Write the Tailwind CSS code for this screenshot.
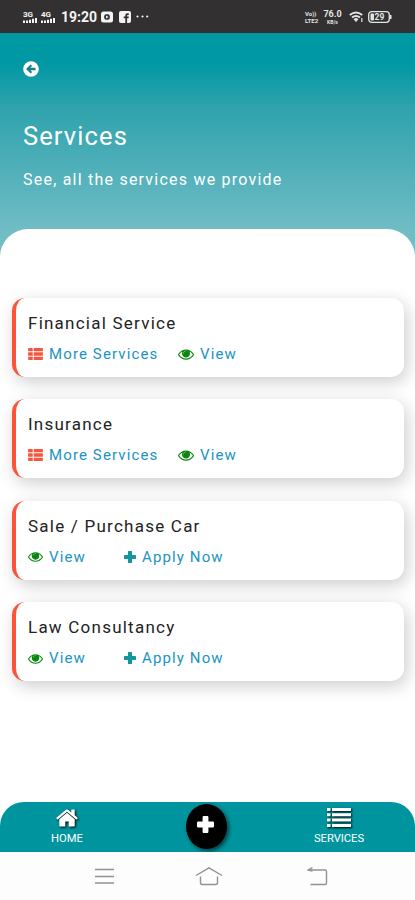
<!DOCTYPE html>
<html lang="en">
<head>
    <meta charset="UTF-8">
    <meta name="viewport" content="width=device-width, initial-scale=1.0">
    <title>Services</title>
    <script src="https://cdn.jsdelivr.net/npm/@tailwindcss/browser@4"></script>
</head>

<body class="bg-white font-['Roboto',sans-serif]">
    <!-- Icons -->
    <svg class="hidden">
        <symbol id="eye" viewBox="0 0 1792 1792">
            <path d="M1664 960q-152-236-381-353 61 104 61 225 0 185-131.5 316.5t-316.5 131.5-316.5-131.5-131.5-316.5q0-121 61-225-229 117-381 353 133 205 333.5 326.5t434.5 121.5 434.5-121.5 333.5-326.5zm-720-384q0-20-14-34t-34-14q-125 0-214.5 89.5t-89.5 214.500q0 20 14 34t34 14 34-14 14-34q0-86 61-147t147-61q20 0 34-14t14-34zm848 384q0 34-20 69-140 230-376.5 368.5t-499.5 138.5-499.5-139-376.5-368q-20-35-20-69t20-69q140-229 376.5-368t499.5-139 499.5 139 376.5 368q20 35 20 69z"/>
            <circle cx="930" cy="900" r="330"/>
        </symbol>
        <symbol id="th-list" viewBox="0 0 16 13">
            <path d="M0 .8q0-.8.8-.8h3.400q.8 0 .8.8v2.800H0zM6 0h9.200q.8 0 .8.8V3.600H6zM0 4.700h5v3.600H0zM6 4.700h10v3.600H6zM0 9.400h5v3.600H.8q-.8 0-.8-.8zM6 9.400h10v2.800q0 .8-.8.8H6z"/>
        </symbol>
        <symbol id="plus" viewBox="0 0 14 14">
            <path d="M5.6 0h2.8q1 0 1 1v3.6H13q1 0 1 1v2.8q0 1-1 1H9.4V13q0 1-1 1H5.6q-1 0-1-1V9.4H1q-1 0-1-1V5.6q0-1 1-1h3.6V1q0-1 1-1z"/>
        </symbol>
    </svg>

    <div class="flex h-[900px] w-[415px] flex-col overflow-hidden">
        <!-- Status bar -->
        <div class="flex h-[33px] shrink-0 items-center justify-between bg-[#323031] pr-[23px] pl-[23px] text-[#f4f4f4]">
            <div class="flex items-center">
                <div class="flex w-[14px] flex-col">
                    <span class="text-[8px] leading-[7px] font-bold">3G</span>
                    <svg class="h-[5px] w-[14px]" viewBox="0 0 14 6" preserveAspectRatio="none" fill="currentColor"><path d="M0 3h2v3H0zM3 3h2v3H3zM6 2h2v4H6zM9 1h2v5H9zM12 0h2v6h-2z"/></svg>
                </div>
                <div class="ml-[4px] flex w-[14px] flex-col">
                    <span class="text-[8px] leading-[7px] font-bold">4G</span>
                    <svg class="h-[5px] w-[14px]" viewBox="0 0 14 6" preserveAspectRatio="none" fill="currentColor"><path d="M0 3h2v3H0zM3 3h2v3H3zM6 2h2v4H6zM9 1h2v5H9zM12 0h2v6h-2z"/></svg>
                </div>
                <span class="ml-[6px] w-[36px] text-[14px] leading-none font-bold whitespace-nowrap">19:20</span>
                <svg class="ml-[4px] h-[12px] w-[12px]" viewBox="0 0 12 12"><rect y=".5" width="12" height="11" rx="2.5" fill="currentColor"/><rect x="3.2" y="3.2" width="5.600" height="5.600" rx="2" fill="#323031"/><path d="M5 4.500l2.600 1.500-2.600 1.500z" fill="currentColor"/></svg>
                <svg class="ml-[6px] h-[12px] w-[12px]" viewBox="0 0 12 12"><rect width="12" height="12" rx="2" fill="currentColor"/><path d="M6.3 12V7.3H4.7V5.5h1.6V4.2q0-2 2-2h1.5v1.7H8.7q-.6 0-.6.7v.9h1.7l-.3 1.8H8.1V12z" fill="#323031"/></svg>
                <svg class="ml-[5px] h-[3px] w-[13px]" viewBox="0 0 13 3" fill="currentColor"><circle cx="1.5" cy="1.5" r="1.1"/><circle cx="6.5" cy="1.5" r="1.1"/><circle cx="11.2" cy="1.5" r="1.1"/></svg>
            </div>
            <div class="flex items-center text-[#e4e4e4]">
                <div class="flex w-[15px] flex-col text-[6px] leading-[7px] font-bold whitespace-nowrap">
                    <span>Vo))</span>
                    <span>LTE2</span>
                </div>
                <div class="ml-[3px] flex w-[19px] flex-col items-center font-bold">
                    <span class="text-[9px] leading-[10px]">76.0</span>
                    <span class="text-[5px] leading-[6px]">KB/s</span>
                </div>
                <svg class="ml-[7px] h-[12px] w-[15px]" viewBox="0 0 15 12" fill="none" stroke="currentColor" stroke-width="1.900"><path d="M.8 4Q7 -1 13.2 4M3 6.6Q7 3.4 11 6.6"/><path d="M5 8.2q2-1.4 4 0L7 10.5z" fill="currentColor" stroke-width="1"/><path d="M12.8 7v4" stroke-width="1.2"/></svg>
                <svg class="ml-[4px] h-[12px] w-[24px]" viewBox="0 0 24 12"><rect x=".7" y=".7" width="20.6" height="10.6" rx="3" fill="none" stroke="currentColor" stroke-width="1.3"/><path d="M22 4h1.5v4H22z" fill="currentColor"/><rect x="2.5" y="2.5" width="3.500" height="7" rx="1" fill="currentColor"/><text x="11.500" y="9" text-anchor="middle" font-size="8.500" font-weight="700" fill="currentColor">29</text></svg>
            </div>
        </div>

        <!-- Header -->
        <div class="flex grow flex-col bg-[linear-gradient(to_bottom,#0098a2_0px,#0098a4_30px,#2fa3ad_75px,#70bcc5_196px,#78c0c9_240px)]">
            <div class="h-[196px] shrink-0 pt-[28px] pl-[23px] text-white">
                <svg class="h-[16px] w-[16px]" viewBox="0 0 16 16"><circle cx="8" cy="8" r="7.8" fill="white"/><path d="M3 8l4.6-4.6 1.5 1.5L7.4 6.7h5.1v2.6H7.4l1.7 1.8-1.5 1.5z" fill="#15818d"/></svg>
                <h1 class="mt-[43px] text-[25.5px] leading-[32px] tracking-[1.1px] whitespace-nowrap">Services</h1>
                <p class="mt-[18px] text-[16px] leading-[20px] tracking-[1.22px] whitespace-nowrap">See, all the services we provide</p>
            </div>

            <!-- Services list -->
            <main class="flex grow flex-col gap-[22.4px] rounded-t-[28px] bg-white pt-[69px] pr-[11px] pl-[12px] text-[15px] tracking-[1.12px] text-[#2094bf]">
                <div class="h-[79px] rounded-[13px] border-l-[4px] border-[#fb5439] bg-white pt-[15px] pl-[12px] shadow-[3px_5px_17px_rgba(0,0,0,0.2)]">
                    <h2 class="text-[17px] leading-[21px] tracking-[1.23px] whitespace-nowrap text-[#222]">Financial Service</h2>
                    <div class="mt-[10px] flex items-center leading-[20px] whitespace-nowrap">
                        <svg class="mr-[6px] h-[12px] w-[15px] fill-[#f4563e]"><use href="#th-list"/></svg>
                        <a class="w-[129px]">More Services</a>
                        <svg class="mr-[6px] h-[16px] w-[16px] fill-[#0a870e]"><use href="#eye"/></svg>
                        <a>View</a>
                    </div>
                </div>
                <div class="h-[79px] rounded-[13px] border-l-[4px] border-[#fb5439] bg-white pt-[15px] pl-[12px] shadow-[3px_5px_17px_rgba(0,0,0,0.2)]">
                    <h2 class="text-[17px] leading-[21px] tracking-[1.23px] whitespace-nowrap text-[#222]">Insurance</h2>
                    <div class="mt-[10px] flex items-center leading-[20px] whitespace-nowrap">
                        <svg class="mr-[6px] h-[12px] w-[15px] fill-[#f4563e]"><use href="#th-list"/></svg>
                        <a class="w-[129px]">More Services</a>
                        <svg class="mr-[6px] h-[16px] w-[16px] fill-[#0a870e]"><use href="#eye"/></svg>
                        <a>View</a>
                    </div>
                </div>
                <div class="h-[79px] rounded-[13px] border-l-[4px] border-[#fb5439] bg-white pt-[15px] pl-[12px] shadow-[3px_5px_17px_rgba(0,0,0,0.2)]">
                    <h2 class="text-[17px] leading-[21px] tracking-[1.23px] whitespace-nowrap text-[#222]">Sale / Purchase Car</h2>
                    <div class="mt-[10px] flex items-center leading-[20px] whitespace-nowrap">
                        <svg class="mr-[6px] h-[15px] w-[15px] fill-[#0a870e]"><use href="#eye"/></svg>
                        <a class="w-[75px]">View</a>
                        <svg class="mr-[6px] h-[12px] w-[12px] fill-[#15959c]"><use href="#plus"/></svg>
                        <a>Apply Now</a>
                    </div>
                </div>
                <div class="h-[79px] rounded-[13px] border-l-[4px] border-[#fb5439] bg-white pt-[15px] pl-[12px] shadow-[3px_5px_17px_rgba(0,0,0,0.2)]">
                    <h2 class="text-[17px] leading-[21px] tracking-[1.23px] whitespace-nowrap text-[#222]">Law Consultancy</h2>
                    <div class="mt-[10px] flex items-center leading-[20px] whitespace-nowrap">
                        <svg class="mr-[6px] h-[15px] w-[15px] fill-[#0a870e]"><use href="#eye"/></svg>
                        <a class="w-[75px]">View</a>
                        <svg class="mr-[6px] h-[12px] w-[12px] fill-[#15959c]"><use href="#plus"/></svg>
                        <a>Apply Now</a>
                    </div>
                </div>
            </main>
        </div>

        <!-- Bottom menu -->
        <nav class="flex h-[50px] shrink-0 justify-between rounded-t-[24px] bg-[#00959e] pr-[50px] pl-[50px] text-[11.2px] leading-[13px] text-white">
            <a class="flex w-[34px] flex-col items-center pt-[4px]">
                <svg class="h-[24px] w-[24px] fill-white drop-shadow-[1px_1px_1px_black]" viewBox="0 0 1792 1792"><path d="M1472 992v480q0 26-19 45t-45 19h-384v-384h-256v384h-384q-26 0-45-19t-19-45v-480q0-1 .5-3t.5-3l575-474 575 474q1 2 1 6zm223-69l-62 74q-8 9-21 11h-3q-13 0-21-7l-692-577-692 577q-12 8-24 7-13-2-21-11l-62-74q-8-10-7-23.5t11-21.5l719-599q32-26 76-26t76 26l244 204v-195q0-14 9-23t23-9h192q14 0 23 9t9 23v408l219 182q10 8 11 21.5t-7 23.5z"/></svg>
                <span class="mt-[2px]">HOME</span>
            </a>
            <a class="mt-[2px] ml-[15px] flex h-[45px] w-[41px] items-center justify-center rounded-[50%] bg-black pr-[2px] pb-[4px] shadow-[2px_2px_4px_rgba(0,0,0,0.6)]">
                <svg class="h-[17px] w-[17px] fill-white"><use href="#plus"/></svg>
            </a>
            <a class="flex w-[52px] flex-col items-center pt-[6px]">
                <svg class="h-[19px] w-[24px] fill-white drop-shadow-[1px_1px_1px_black]" viewBox="0 0 24 19"><path d="M0 0h3.5v3H0zM5 0h19v3H5zM0 5.3h3.5v3H0zM5 5.3h19v3H5zM0 10.6h3.5v3H0zM5 10.6h19v3H5zM0 15.9h3.5v3H0zM5 15.9h19v3H5z"/></svg>
                <span class="mt-[5px]">SERVICES</span>
            </a>
        </nav>

        <!-- System navigation -->
        <div class="flex h-[48px] shrink-0 items-start justify-between bg-[#fdfdfd] pt-[14px] pr-[87px] pl-[94px]">
            <svg class="h-[20px] w-[21px]" viewBox="0 0 21 20" fill="none" stroke="#929292" stroke-width="1.4"><path d="M1 3.5h19M1 10.5h19M1 17h19"/></svg>
            <svg class="mr-[5px] h-[20px] w-[28px]" viewBox="0 0 28 20" fill="none" stroke="#929292" stroke-width="1.4"><path d="M1 9.5L14 1.8l13 7.7M5.5 10.5v6q0 2 2 2h13q2 0 2-2v-6"/></svg>
            <svg class="h-[20px] w-[21px]" viewBox="0 0 21 20" fill="none" stroke="#929292" stroke-width="1.4"><path d="M1 4h17q1.500 0 1.500 1.500v11.500q0 1.500-1.500 1.500H3.500M5.500 1.500L1 4l4.500 1"/></svg>
        </div>
    </div>
</body>
</html>
